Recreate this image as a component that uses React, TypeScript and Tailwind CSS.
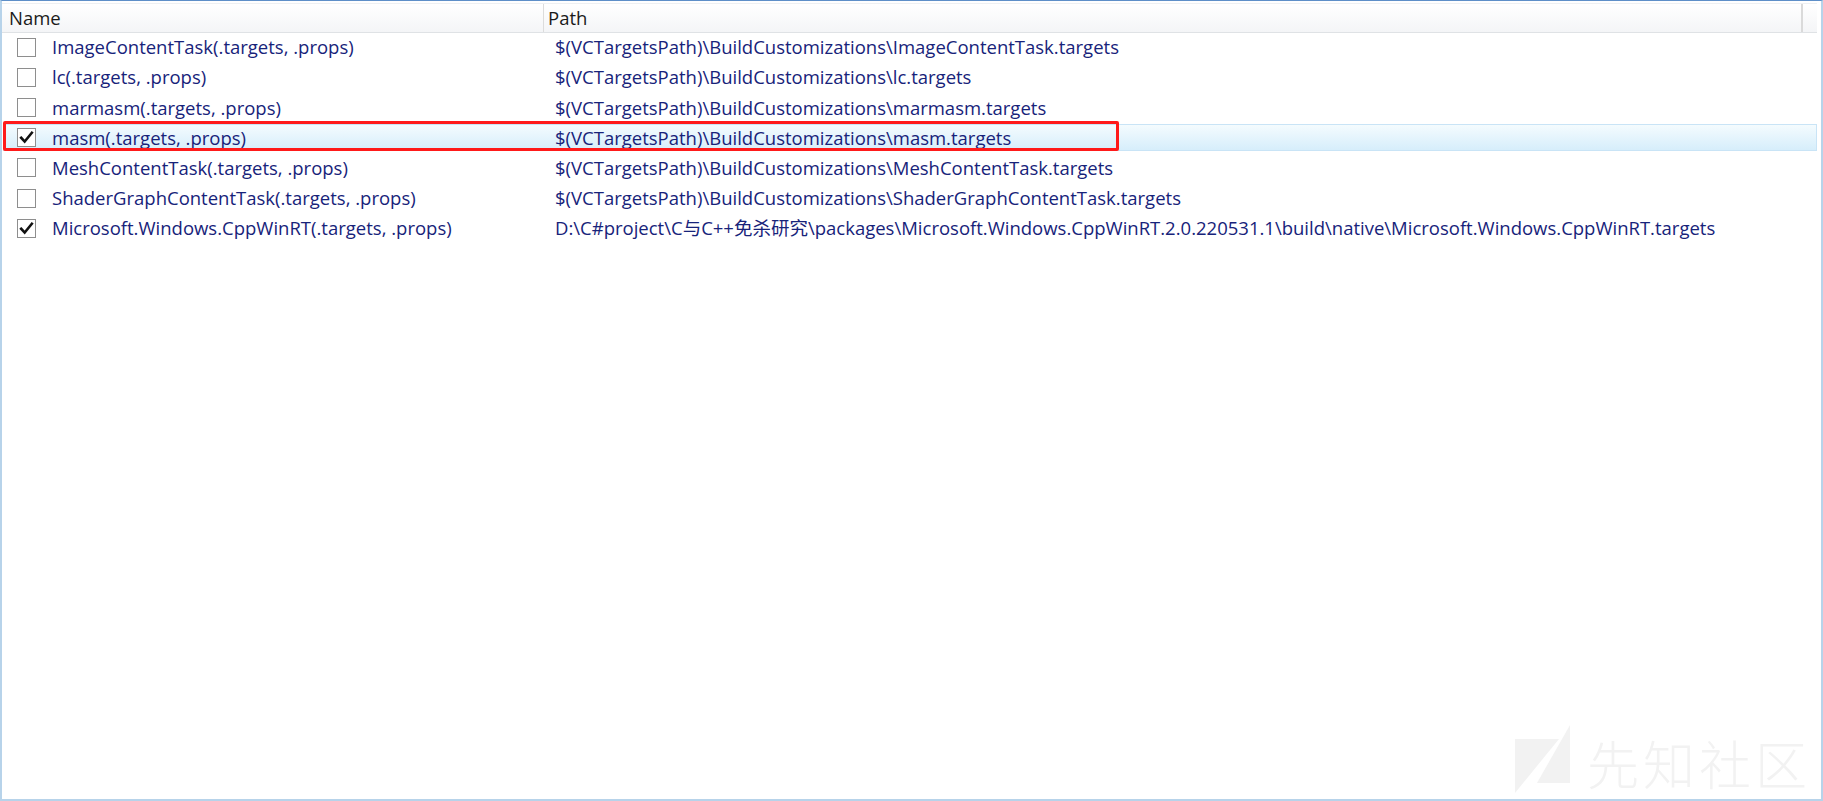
import React from "react";

type Row = { name: string; path: string; checked: boolean; selected?: boolean };

const ROWS: Row[] = [
  { name: "ImageContentTask(.targets, .props)", path: "$(VCTargetsPath)\\BuildCustomizations\\ImageContentTask.targets", checked: false },
  { name: "lc(.targets, .props)", path: "$(VCTargetsPath)\\BuildCustomizations\\lc.targets", checked: false },
  { name: "marmasm(.targets, .props)", path: "$(VCTargetsPath)\\BuildCustomizations\\marmasm.targets", checked: false },
  { name: "masm(.targets, .props)", path: "$(VCTargetsPath)\\BuildCustomizations\\masm.targets", checked: true, selected: true },
  { name: "MeshContentTask(.targets, .props)", path: "$(VCTargetsPath)\\BuildCustomizations\\MeshContentTask.targets", checked: false },
  { name: "ShaderGraphContentTask(.targets, .props)", path: "$(VCTargetsPath)\\BuildCustomizations\\ShaderGraphContentTask.targets", checked: false },
  {
    name: "Microsoft.Windows.CppWinRT(.targets, .props)",
    path: "D:\\C#project\\C与C++免杀研究\\packages\\Microsoft.Windows.CppWinRT.2.0.220531.1\\build\\native\\Microsoft.Windows.CppWinRT.targets",
    checked: true,
  },
];

function CheckBox({ checked }: { checked: boolean }) {
  return (
    <span className="flex h-[19px] w-[19px] shrink-0 items-center justify-center border border-[#8e8e8e] bg-white">
      {checked && (
        <svg width="15" height="15" viewBox="0 0 14 14">
          <path d="M2 7.2 L5.3 10.8 L12 2.6" fill="none" stroke="#111" strokeWidth="2.4" strokeLinecap="square" />
        </svg>
      )}
    </span>
  );
}

export default function App() {
  return (
    <div
      className="relative h-[801px] w-[1823px] overflow-hidden border-x-2 border-b-2 border-t border-x-[#b7d3ea] border-b-[#b7d3ea] border-t-[#5e8fc8] bg-white"
      style={{ fontFamily: '"Open Sans", "Noto Sans CJK SC", sans-serif' }}
    >
      {/* header */}
      <div className="mt-[2px] flex h-[30px] w-[1815px] border-b border-t border-b-[#dfe2e5] border-t-[#eef0f2] bg-gradient-to-b from-white to-[#f4f5f7] text-[18.5px] text-[#1a1a1a]">
        <div className="flex w-[542px] items-center border-r border-[#dcdcdc] pl-[7px]">Name</div>
        <div className="flex flex-1 items-center border-r-2 border-[#dadada] pl-[4px]">Path</div>
        <div className="w-[14px]" />
      </div>

      {/* rows */}
      <div className="-mt-[1px] flex flex-col">
        {ROWS.map((r) => (
          <div key={r.name} className="flex h-[30.2px] items-center">
            <div
              className={
                r.selected
                  ? "ml-[1px] flex h-[27px] w-[1814px] items-center border border-[#c9e4f6] bg-gradient-to-b from-[#f4fbfe] to-[#d6eefb]"
                  : "ml-[1px] flex h-[27px] w-[1814px] items-center border border-transparent"
              }
            >
              <div className="flex w-[542px] items-center gap-[16px] pl-[13px] text-[18.5px] text-[#17237a]">
                <CheckBox checked={r.checked} />
                <span className="whitespace-nowrap">{r.name}</span>
              </div>
              <span className="whitespace-nowrap pl-[9px] text-[18.5px] text-[#17237a]">{r.path}</span>
            </div>
          </div>
        ))}
      </div>

      {/* red highlight annotation */}
      <div className="absolute left-[1px] top-[120px] h-[30px] w-[1116px] rounded-[2px] border-[3px] border-[#ff1a1a]" />

      {/* watermark */}
      <div className="absolute left-[1511px] top-[724px] flex items-end gap-[16px]">
        <svg width="58" height="68" viewBox="0 0 58 68">
          <polygon points="2,14 46,14 2,68" fill="#f2f2f2" />
          <polygon points="57,0 57,58 24,58" fill="#f2f2f2" />
        </svg>
        <span
          className="text-[52px] font-light leading-[60px] tracking-[4px] text-[#f2f2f2]"
          style={{ fontFamily: '"Noto Sans CJK SC", sans-serif' }}
        >
          先知社区
        </span>
      </div>
    </div>
  );
}
